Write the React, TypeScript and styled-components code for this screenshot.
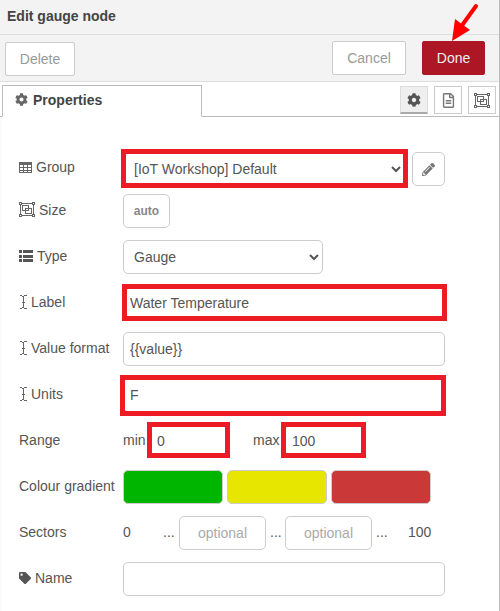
import React from 'react'
import styled, { createGlobalStyle } from 'styled-components'
import { FaCog, FaPencilAlt, FaRegFileAlt, FaTag } from 'react-icons/fa'

const GlobalStyle = createGlobalStyle`
  html, body {
    margin: 0;
    padding: 0;
    background: #fff;
  }
  * {
    box-sizing: border-box;
  }
`

const Tray = styled.div`
  position: relative;
  width: 500px;
  height: 611px;
  overflow: hidden;
  font-family: "Liberation Sans", Arial, sans-serif;
  font-size: 14px;
  color: #555;
  background: #fff;
  border-right: 1px solid #bbb;
`

const TitleBar = styled.div`
  height: 35px;
  padding: 8px 7px 0;
  font-weight: 700;
  color: #444;
  background: #f3f3f3;
  border-bottom: 1px solid #ddd;
`

const Toolbar = styled.div`
  display: flex;
  align-items: flex-start;
  height: 47px;
  padding: 6px 14px 0 5px;
  background: #f3f3f3;
  border-bottom: 1px solid #ddd;
`

const ActionButton = styled.button<{ $primary?: boolean; $nudge?: number; $width: number; $left?: number }>`
  width: ${(p) => p.$width}px;
  height: 34px;
  padding: 0;
  margin-top: ${(p) => p.$nudge ?? 0}px;
  margin-left: ${(p) => p.$left ?? 0}px;
  font: inherit;
  color: ${(p) => (p.$primary ? '#eee' : '#999')};
  background: ${(p) => (p.$primary ? '#ad1625' : '#fff')};
  border: 1px solid ${(p) => (p.$primary ? '#ad1625' : '#ccc')};
  border-radius: 2px;
`

const Spacer = styled.div`
  flex: 1;
`

const TabStrip = styled.div`
  display: flex;
  align-items: flex-end;
  height: 35px;
  padding: 0 3px 0 2px;
  border-bottom: 1px solid #bbb;
`

const Tab = styled.div`
  display: flex;
  align-items: center;
  gap: 5px;
  width: 200px;
  height: 32px;
  margin-bottom: -1px;
  padding: 0 0 3px 12px;
  font-weight: 700;
  color: #444;
  background: #fff;
  border: 1px solid #bbb;
  border-bottom-color: #fff;
  svg {
    color: #666;
  }
`

const TabIcons = styled.div`
  display: flex;
  gap: 6px;
  margin-left: auto;
  margin-bottom: 2px;
`

const TabIcon = styled.button<{ $active?: boolean }>`
  display: flex;
  align-items: center;
  justify-content: center;
  width: 28px;
  height: 28px;
  padding: 0;
  color: ${(p) => (p.$active ? '#555' : '#777')};
  background: ${(p) => (p.$active ? '#efefef' : '#fff')};
  border: 1px solid #ccc;
  border-bottom: ${(p) => (p.$active ? '2px solid #aaa' : '1px solid #ccc')};
  border-color: ${(p) => (p.$active ? '#ddd #ddd #aaa' : '#ccc')};
`

const Form = styled.div`
  display: flex;
  flex-direction: column;
  gap: 12px;
  padding: 35px 0 0 17px;
  border-left: 2px solid #fafafa;
  height: 494px;
`

const Row = styled.div<{ $tight?: boolean }>`
  position: relative;
  display: flex;
  align-items: center;
  height: 34px;
  margin-top: ${(p) => (p.$tight ? -4 : 0)}px;
`

const Label = styled.label<{ $lift?: number }>`
  display: flex;
  align-items: center;
  gap: 4px;
  width: 104px;
  flex: none;
  margin-top: -${(p) => p.$lift ?? 3}px;
  white-space: nowrap;
  svg {
    flex: none;
  }
`

const Select = styled.select<{ $width: number }>`
  width: ${(p) => p.$width}px;
  height: 34px;
  padding: 6px;
  font: inherit;
  color: #555;
  background: #fff;
  border: 1px solid #ccc;
  border-radius: 5px;
  outline: none;
`

const Input = styled.input<{ $width?: number }>`
  width: ${(p) => p.$width ?? 322}px;
  height: 34px;
  padding: 6px;
  font: inherit;
  color: #555;
  background: #fff;
  border: 1px solid #ccc;
  border-radius: 5px;
  outline: none;
  &::placeholder {
    color: #aaa;
    text-align: center;
  }
`

const SquareButton = styled.button<{ $width: number; $left?: number }>`
  display: flex;
  align-items: center;
  justify-content: center;
  width: ${(p) => p.$width}px;
  height: 34px;
  margin-left: ${(p) => p.$left ?? 0}px;
  padding: 0;
  font: 700 12px "Liberation Sans", Arial, sans-serif;
  color: #888;
  background: #fff;
  border: 1px solid #ccc;
  border-radius: 5px;
`

const Swatches = styled.div`
  display: flex;
  gap: 4px;
`

const Swatch = styled.div<{ $color: string }>`
  width: 100px;
  height: 34px;
  background: ${(p) => p.$color};
  border: 1px solid #ccc;
  border-radius: 5px;
`

const Inline = styled.span<{ $width?: number; $left?: number }>`
  flex: none;
  width: ${(p) => (p.$width ? `${p.$width}px` : 'auto')};
  margin-left: ${(p) => p.$left ?? 0}px;
  margin-top: -3px;
`

// the red rectangles drawn over the screenshot by hand
const Marker = styled.div<{ $x: number; $y: number; $w: number; $h: number }>`
  position: absolute;
  left: ${(p) => p.$x}px;
  top: ${(p) => p.$y}px;
  width: ${(p) => p.$w}px;
  height: ${(p) => p.$h}px;
  border: 5px solid #ed1c24;
  pointer-events: none;
`

const ArrowMark = styled.svg`
  position: absolute;
  left: 448px;
  top: 3px;
  width: 34px;
  height: 40px;
`

const TableIcon = () => (
  <svg width="13" height="11" viewBox="0 0 13 11" shapeRendering="crispEdges">
    <path d="M0 0h13v3H0z" fill="#666" />
    <path d="M.5.5h12v10H.5zM.5 5.5h12M.5 8h12M4.5 3v8M8.5 3v8" fill="none" stroke="#666" />
  </svg>
)

const UngroupIcon = () => (
  <svg width="16" height="15" viewBox="0 0 16 15" shapeRendering="crispEdges">
    <path
      d="M.5.5h2v2h-2zM13.5.5h2v2h-2zM.5 12.5h2v2h-2zM13.5 12.5h2v2h-2zM3 1.5h10M3 13.5h10M1.5 3v9M14.5 3v9"
      fill="none"
      stroke="#666"
    />
    <path d="M3.5 3.5h6v5h-6zM6.5 6.5h6v5h-6z" fill="none" stroke="#666" />
  </svg>
)

const ListIcon = () => (
  <svg width="14" height="12" viewBox="0 0 14 12" shapeRendering="crispEdges">
    <path d="M0 0h3v3H0zM4 0h10v3H4zM0 4.5h3v3H0zM4 4.5h10v3H4zM0 9h3v3H0zM4 9h10v3H4z" fill="#555" />
  </svg>
)

const CursorIcon = () => (
  <svg width="8" height="14" viewBox="0 0 8 14" shapeRendering="crispEdges">
    <path d="M.5.5h2.5M5 .5h2.5M.5 13.5h2.5M5 13.5h2.5M3 1.5h2M3 12.5h2M4 1.5v11M2.5 7h3" fill="none" stroke="#666" />
  </svg>
)

export default function App() {
  return (
    <Tray>
      <GlobalStyle />
      <TitleBar>Edit gauge node</TitleBar>
      <Toolbar>
        <ActionButton $width={70} $nudge={1}>Delete</ActionButton>
        <Spacer />
        <ActionButton $width={74}>Cancel</ActionButton>
        <ActionButton $width={63} $left={16} $primary>Done</ActionButton>
      </Toolbar>
      <TabStrip>
        <Tab>
          <FaCog size={13} />
          Properties
        </Tab>
        <TabIcons>
          <TabIcon $active><FaCog size={14} /></TabIcon>
          <TabIcon><FaRegFileAlt size={15} /></TabIcon>
          <TabIcon><UngroupIcon /></TabIcon>
        </TabIcons>
      </TabStrip>
      <Form>
        <Row>
          <Label $lift={4}><TableIcon />Group</Label>
          <Select $width={282} defaultValue="default">
            <option value="default">[IoT Workshop] Default</option>
          </Select>
          <SquareButton $width={33} $left={7}><FaPencilAlt size={13} color="#777" /></SquareButton>
          <Marker $x={102} $y={-3} $w={287} $h={39} />
        </Row>
        <Row $tight>
          <Label><UngroupIcon />Size</Label>
          <SquareButton $width={47}>auto</SquareButton>
        </Row>
        <Row>
          <Label><ListIcon />Type</Label>
          <Select $width={200} defaultValue="gauge">
            <option value="gauge">Gauge</option>
          </Select>
        </Row>
        <Row>
          <Label><CursorIcon />Label</Label>
          <Input readOnly value="Water Temperature" />
          <Marker $x={103} $y={-2} $w={325} $h={37} />
        </Row>
        <Row>
          <Label><CursorIcon />Value format</Label>
          <Input readOnly value="{{value}}" />
        </Row>
        <Row>
          <Label><CursorIcon />Units</Label>
          <Input readOnly value="F" />
          <Marker $x={101} $y={-3} $w={326} $h={41} />
        </Row>
        <Row>
          <Label>Range</Label>
          <Inline $width={27}>min</Inline>
          <Input $width={80} readOnly value="0" />
          <Inline $width={32} $left={23}>max</Inline>
          <Input $width={80} readOnly value="100" />
          <Marker $x={128} $y={-2} $w={83} $h={36} />
          <Marker $x={262} $y={-2} $w={85} $h={36} />
        </Row>
        <Row>
          <Label>Colour gradient</Label>
          <Swatches>
            <Swatch $color="#00b500" />
            <Swatch $color="#e6e600" />
            <Swatch $color="#ca3838" />
          </Swatches>
        </Row>
        <Row>
          <Label>Sectors</Label>
          <Inline $width={40}>0</Inline>
          <Inline $width={16}>...</Inline>
          <Input $width={87} placeholder="optional" />
          <Inline $width={15} $left={4}>...</Inline>
          <Input $width={87} placeholder="optional" />
          <Inline $width={32} $left={4}>...</Inline>
          <Inline>100</Inline>
        </Row>
        <Row>
          <Label><FaTag size={12} color="#555" />Name</Label>
          <Input readOnly value="" />
        </Row>
      </Form>
      <ArrowMark viewBox="0 0 34 40">
        <path d="M28 3 L15 21" stroke="#f00" strokeWidth="4" strokeLinecap="round" fill="none" />
        <path d="M4 38 L7 16 L22 27 Z" fill="#f00" />
      </ArrowMark>
    </Tray>
  )
}
